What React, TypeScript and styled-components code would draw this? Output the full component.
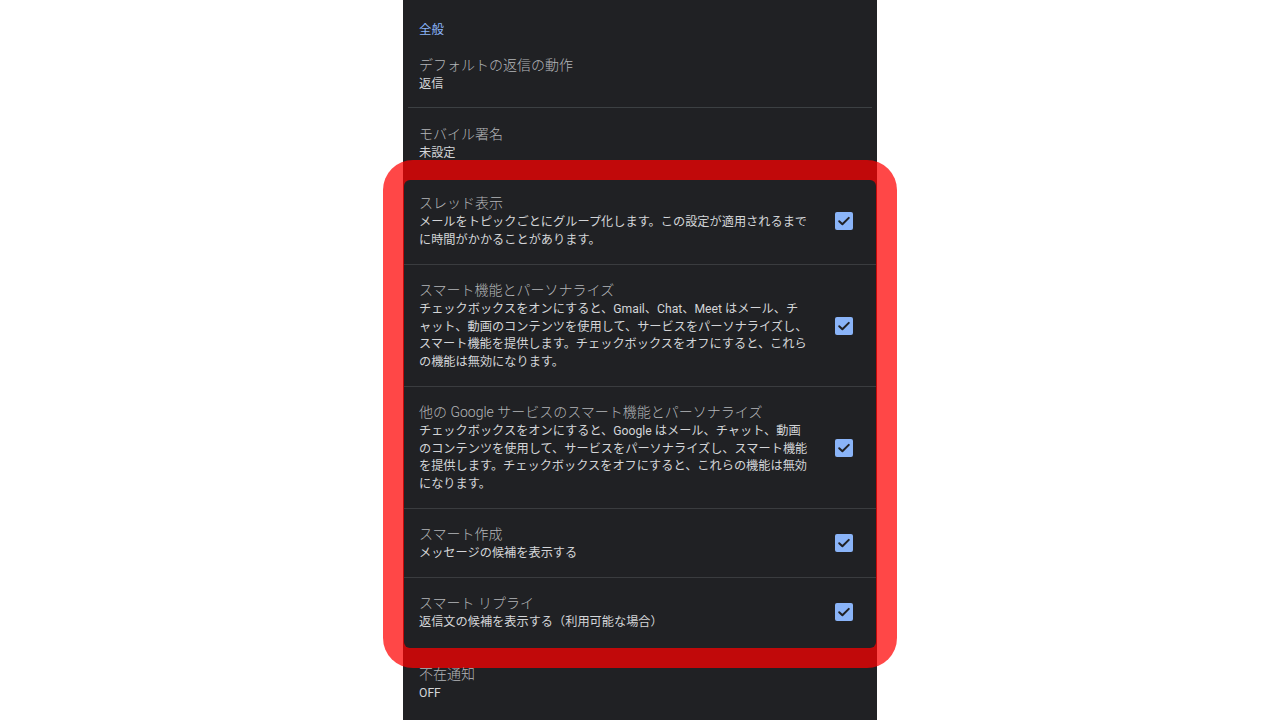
import React from "react";
import styled, { createGlobalStyle } from "styled-components";

const GlobalStyle = createGlobalStyle`
  html, body {
    margin: 0;
    padding: 0;
    background: #ffffff;
  }
  body {
    font-family: Roboto, "Noto Sans CJK JP", sans-serif;
    -webkit-font-smoothing: antialiased;
  }
`;

const Screen = styled.div`
  width: 474px;
  height: 720px;
  margin: 0 auto;
  background: #202124;
  display: flex;
  flex-direction: column;
`;

const SectionHeader = styled.div`
  padding: 21px 16px 0;
  font-size: 12.5px;
  line-height: 18px;
  color: #8ab4f8;
`;

const Row = styled.div<{ $divider?: boolean; $pt?: number; $pb?: number }>`
  display: flex;
  align-items: center;
  padding: ${(p) => p.$pt ?? 16}px 24px ${(p) => p.$pb ?? 15}px 16px;
  border-bottom: ${(p) => (p.$divider ? "1px solid #3c4043" : "none")};
`;

const PlainRow = styled(Row)`
  margin: 0 5px;
  padding-left: 11px;
  padding-right: 11px;
`;

const TextBlock = styled.div`
  flex: 1;
  min-width: 0;
`;

const Title = styled.div`
  font-size: 14px;
  line-height: 21px;
  font-weight: 300;
  color: #b4b6b9;
  white-space: nowrap;
`;

const Summary = styled.div`
  font-size: 12.2px;
  line-height: 17.5px;
  color: #d3d5d8;
  white-space: nowrap;
`;

const Highlight = styled.div`
  margin: -2px -20px -4px;
  padding: 20px 21px;
  border-radius: 30px;
  background: rgba(255, 0, 0, 0.72);
`;

const Card = styled.div`
  background: #202124;
  border-radius: 6px;
  overflow: hidden;
`;

const CardRow = styled(Row)`
  padding-left: 15px;
  padding-right: 22px;
  border-bottom-color: #3a3c3f;
`;

const CheckWrap = styled.div`
  width: 20px;
  height: 20px;
  margin-left: 16px;
  flex-shrink: 0;
  display: flex;
  align-items: center;
  justify-content: center;
`;

const Checkbox = () => (
  <CheckWrap>
    <svg width="20" height="20" viewBox="0 0 20 20">
      <rect x="1" y="1" width="18" height="18" rx="2" fill="#8ab4f8" />
      <path
        d="M5.2 10.2 L8.4 13.3 L14.8 6.9"
        fill="none"
        stroke="#202124"
        strokeWidth="2"
        strokeLinecap="round"
        strokeLinejoin="round"
      />
    </svg>
  </CheckWrap>
);

const cardItems = [
  {
    title: "スレッド表示",
    lines: [
      "メールをトピックごとにグループ化します。この設定が適用されるまで",
      "に時間がかかることがあります。",
    ],
    pt: 13,
    pb: 15,
  },
  {
    title: "スマート機能とパーソナライズ",
    lines: [
      "チェックボックスをオンにすると、Gmail、Chat、Meet はメール、チ",
      "ャット、動画のコンテンツを使用して、サービスをパーソナライズし、",
      "スマート機能を提供します。チェックボックスをオフにすると、これら",
      "の機能は無効になります。",
    ],
    pt: 15,
    pb: 15,
  },
  {
    title: "他の Google サービスのスマート機能とパーソナライズ",
    lines: [
      "チェックボックスをオンにすると、Google はメール、チャット、動画",
      "のコンテンツを使用して、サービスをパーソナライズし、スマート機能",
      "を提供します。チェックボックスをオフにすると、これらの機能は無効",
      "になります。",
    ],
    pt: 15,
    pb: 15,
  },
  {
    title: "スマート作成",
    lines: ["メッセージの候補を表示する"],
    pt: 15,
    pb: 14.5,
  },
  {
    title: "スマート リプライ",
    lines: ["返信文の候補を表示する（利用可能な場合）"],
    pt: 15,
    pb: 16.5,
  },
];

export default function App() {
  return (
    <>
      <GlobalStyle />
      <Screen>
        <SectionHeader>全般</SectionHeader>
        <PlainRow $divider $pt={16} $pb={13}>
          <TextBlock>
            <Title>デフォルトの返信の動作</Title>
            <Summary>返信</Summary>
          </TextBlock>
        </PlainRow>
        <Row $pt={16} $pb={0}>
          <TextBlock>
            <Title>モバイル署名</Title>
            <Summary>未設定</Summary>
          </TextBlock>
        </Row>

        <Highlight>
          <Card>
            {cardItems.map((item, i) => (
              <CardRow
                key={item.title}
                $divider={i < cardItems.length - 1}
                $pt={item.pt}
                $pb={item.pb}
              >
                <TextBlock>
                  <Title>{item.title}</Title>
                  <Summary>
                    {item.lines.map((line, j) => (
                      <React.Fragment key={j}>
                        {j > 0 && <br />}
                        {line}
                      </React.Fragment>
                    ))}
                  </Summary>
                </TextBlock>
                <Checkbox />
              </CardRow>
            ))}
          </Card>
        </Highlight>

        <Row $pt={0} $pb={15}>
          <TextBlock>
            <Title>不在通知</Title>
            <Summary>OFF</Summary>
          </TextBlock>
        </Row>
      </Screen>
    </>
  );
}
